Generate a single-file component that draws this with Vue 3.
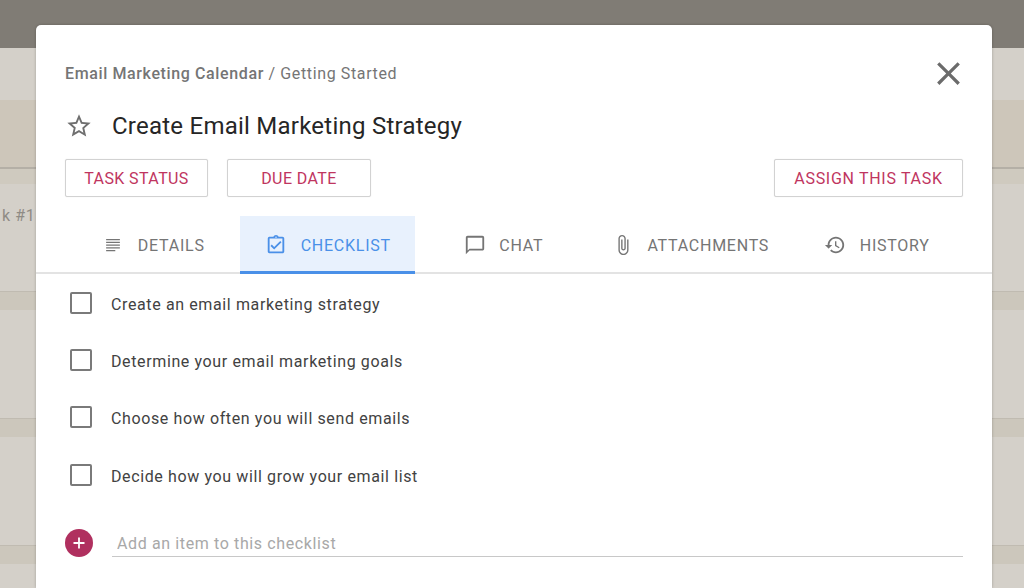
<script setup>
const tabs = [
  { label: 'DETAILS', icon: 'details' },
  { label: 'CHECKLIST', icon: 'M18 9l-1.41-1.42L10 14.17l-2.59-2.58L6 13l4 4zm1-6h-4.18C14.4 1.84 13.3 1 12 1c-1.3 0-2.4.84-2.82 2H5c-.14 0-.27.01-.4.04-.39.08-.74.28-1.01.55-.18.18-.33.4-.43.64-.1.23-.16.49-.16.77v14c0 .27.06.54.16.78s.25.45.43.64c.27.27.62.47 1.01.55.13.02.26.03.4.03h14c1.1 0 2-.9 2-2V5c0-1.1-.9-2-2-2zm-7-.25c.41 0 .75.34.75.75s-.34.75-.75.75-.75-.34-.75-.75.34-.75.75-.75zM19 19H5V5h14v14z', active: true },
  { label: 'CHAT', icon: 'M20 2H4c-1.1 0-2 .9-2 2v18l4-4h14c1.1 0 2-.9 2-2V4c0-1.1-.9-2-2-2zm0 14H6l-2 2V4h16v12z' },
  { label: 'ATTACHMENTS', icon: 'M16.5 6v11.5c0 2.21-1.79 4-4 4s-4-1.79-4-4V5c0-1.38 1.12-2.5 2.5-2.5s2.5 1.12 2.5 2.5v10.5c0 .55-.45 1-1 1s-1-.45-1-1V6H10v9.5c0 1.38 1.12 2.5 2.5 2.5s2.5-1.12 2.5-2.5V5c0-2.21-1.79-4-4-4S7 2.79 7 5v12.5c0 3.04 2.46 5.5 5.5 5.5s5.5-2.46 5.5-5.5V6h-1.5z' },
  { label: 'HISTORY', icon: 'M13 3c-4.97 0-9 4.03-9 9H1l3.89 3.89.07.14L9 12H6c0-3.87 3.13-7 7-7s7 3.13 7 7-3.13 7-7 7c-1.93 0-3.68-.79-4.94-2.06l-1.42 1.42C8.27 19.99 10.51 21 13 21c4.97 0 9-4.03 9-9s-4.03-9-9-9zm-1 5v5l4.28 2.54.72-1.21-3.5-2.08V8H12z' },
]

const items = [
  'Create an email marketing strategy',
  'Determine your email marketing goals',
  'Choose how often you will send emails',
  'Decide how you will grow your email list',
]
</script>

<template>
  <div class="page">
    <div class="backdrop">
      <div class="topbar"></div>
      <div class="band light h52"></div>
      <div class="band tan h67"></div>
      <div class="band rule first h17"></div>
      <div class="band light h107"><span class="peek">k #1</span></div>
      <div class="band rule h19"></div>
      <div class="band light h108"></div>
      <div class="band rule h19"></div>
      <div class="band light h108"></div>
      <div class="band rule h19"></div>
      <div class="band light h24"></div>
    </div>

    <div class="modal">
      <div class="crumbs">
        <div class="crumb-text"><b>Email Marketing Calendar</b> / Getting Started</div>
        <svg class="close" viewBox="0 0 24 24"><path d="M19 6.41L17.59 5 12 10.59 6.41 5 5 6.41 10.59 12 5 17.59 6.41 19 12 13.41 17.59 19 19 17.59 13.41 12z" /></svg>
      </div>

      <div class="title-row">
        <svg class="star" viewBox="0 0 24 24"><path d="M22 9.24l-7.19-.62L12 2 9.19 8.63 2 9.24l5.46 4.73L5.82 21 12 17.27 18.18 21l-1.63-7.03L22 9.24zM12 15.4l-3.76 2.27 1-4.28-3.32-2.88 4.38-.38L12 6.1l1.71 4.04 4.38.38-3.32 2.88 1 4.28L12 15.4z" /></svg>
        <h1>Create Email Marketing Strategy</h1>
      </div>

      <div class="actions">
        <button class="status">TASK STATUS</button>
        <button class="due">DUE DATE</button>
        <button class="assign">ASSIGN THIS TASK</button>
      </div>

      <div class="tabs">
        <div v-for="tab in tabs" :key="tab.label" :class="{ tab: true, active: tab.active }">
          <svg v-if="tab.icon === 'details'" class="tab-icon" viewBox="0 0 24 24">
            <path d="M4.5 5.5h15v1.3h-15zM4.5 8.5h15v1.3h-15zM4.5 11.5h15v1.3h-15zM4.5 14.5h15v1.3h-15zM4.5 17.5h10v1.3h-10z" />
          </svg>
          <svg v-else class="tab-icon" viewBox="0 0 24 24"><path :d="tab.icon" /></svg>
          <span>{{ tab.label }}</span>
        </div>
      </div>

      <ul class="list">
        <li v-for="item in items" :key="item">
          <span class="box"></span>
          <span>{{ item }}</span>
        </li>
      </ul>

      <div class="add-row">
        <span class="add-btn">
          <svg viewBox="0 0 12 12"><path d="M5.1 0.5h1.8v4.6h4.6v1.8H6.9v4.6H5.1V6.9H0.5V5.1h4.6z" /></svg>
        </span>
        <input class="add-input" type="text" placeholder="Add an item to this checklist" />
      </div>
    </div>
  </div>
</template>

<style>
html,
body {
  margin: 0;
  overflow: hidden;
}
</style>

<style scoped>
.page {
  position: relative;
  width: 1024px;
  height: 588px;
  overflow: hidden;
  font-family: Roboto, "Liberation Sans", sans-serif;
}

.backdrop {
  display: flex;
  flex-direction: column;
  height: 100%;
  background: #d4d0c9;
}

.topbar {
  height: 48px;
  background: #807c75;
}

.band.light {
  background: #d4d0c9;
}

.band.tan {
  background: #cdc6ba;
}

.band.rule {
  background: #ccc7bc;
  border-top: 1px solid #c0bbb1;
  box-sizing: border-box;
}

.band.rule.first {
  background: #cfcabf;
  border-top: 2px solid #b4afa6;
}

.h52 { height: 52px; }
.h67 { height: 67px; }
.h17 { height: 17px; }
.h107 { height: 107px; }
.h108 { height: 108px; }
.h19 { height: 19px; }
.h24 { height: 24px; }

.peek {
  display: block;
  margin-top: 22px;
  margin-left: 2px;
  font-size: 16px;
  letter-spacing: 0.6px;
  color: #8f8b85;
}

.modal {
  position: absolute;
  top: 25px;
  left: 36px;
  right: 32px;
  bottom: 0;
  background: #fff;
  border-radius: 5px 5px 0 0;
  box-shadow: 0 0 3px rgba(0, 0, 0, 0.25);
}

.crumbs {
  display: flex;
  align-items: center;
  justify-content: space-between;
  height: 38px;
  margin-top: 29px;
  padding: 0 24px 0 29px;
  color: #757575;
  font-size: 16px;
  letter-spacing: 0.62px;
}

.crumbs b {
  font-weight: 500;
}

.close {
  width: 39px;
  height: 39px;
  fill: #6b6b6b;
}

.title-row {
  display: flex;
  align-items: center;
  gap: 19px;
  height: 40px;
  margin-top: 14px;
  padding-left: 29px;
}

.star {
  width: 28px;
  height: 28px;
  fill: #6f6f6f;
}

h1 {
  margin: 0;
  font-size: 24px;
  font-weight: 400;
  letter-spacing: 0.24px;
  color: #262626;
}

.actions {
  display: flex;
  gap: 19px;
  margin-top: 13px;
  padding: 0 29px;
}

.actions button {
  height: 38px;
  padding: 0;
  background: #fff;
  border: 1px solid #d2d2d2;
  border-radius: 2px;
  box-shadow: 0 0 1px rgba(0, 0, 0, 0.15);
  font: inherit;
  font-size: 16px;
  letter-spacing: 0.4px;
  color: #bf3560;
}

.status { width: 143px; }
.due { width: 144px; }

.actions .assign {
  width: 189px;
  margin-left: auto;
  letter-spacing: 0.7px;
}

.tabs {
  display: grid;
  grid-template-columns: 174px 175px 176px 198px 175px;
  height: 58px;
  margin-top: 19px;
  padding-left: 30px;
  box-sizing: border-box;
  border-bottom: 2px solid #e3e3e3;
}

.tab {
  display: flex;
  align-items: center;
  justify-content: center;
  gap: 13.5px;
  height: 58px;
  box-sizing: border-box;
  font-size: 16px;
  letter-spacing: 0.75px;
  color: #757575;
}

.tab.active {
  background: #e8f1fd;
  box-shadow: inset 0 -3px 0 #4a90e8;
  color: #4a90e8;
}

.tab-icon {
  width: 22px;
  height: 22px;
  margin-left: 1px;
  fill: #757575;
}

.tab.active .tab-icon {
  fill: #4a90e8;
}

.list {
  margin: 0;
  padding: 2px 0 0 34px;
  list-style: none;
}

.list li {
  display: flex;
  align-items: center;
  gap: 19px;
  height: 57.2px;
  font-size: 16px;
  letter-spacing: 0.62px;
  color: #424242;
}

.box {
  width: 22px;
  height: 22px;
  margin-bottom: 3px;
  box-sizing: border-box;
  border: 2px solid #7a7a7a;
  border-radius: 2px;
}

.add-row {
  display: flex;
  align-items: center;
  gap: 19px;
  margin-top: 24.5px;
  padding: 0 29px;
}

.add-btn {
  display: flex;
  align-items: center;
  justify-content: center;
  flex: none;
  width: 28px;
  height: 28px;
  border-radius: 50%;
  background: #b0305f;
}

.add-btn svg {
  width: 12px;
  height: 12px;
  fill: #fff;
}

.add-input {
  flex: 1;
  height: 28px;
  padding: 2px 5px 0;
  border: none;
  border-bottom: 1px solid #c8c8c8;
  outline: none;
  font: inherit;
  font-size: 16px;
  letter-spacing: 0.62px;
  box-sizing: border-box;
}

.add-input::placeholder {
  color: #a8a8a8;
  opacity: 1;
}
</style>
